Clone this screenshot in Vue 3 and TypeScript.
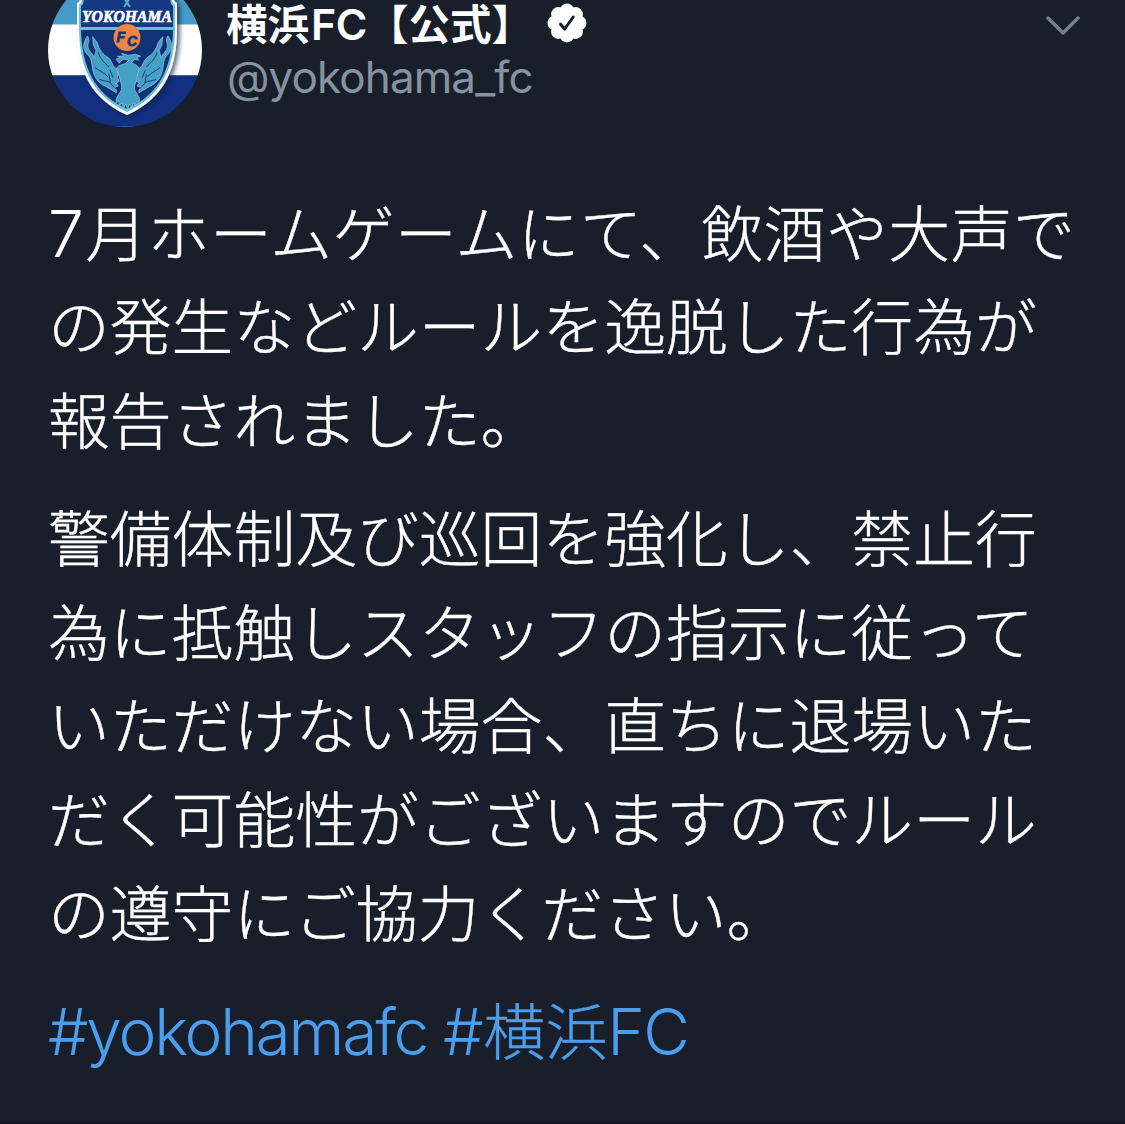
<template>
    <article class="tweet">
        <header class="tweet-header">
            <svg class="avatar" viewBox="0 0 154 154" aria-label="横浜FC">
                <defs>
                    <clipPath id="avatarClip"><circle cx="77" cy="77" r="77" /></clipPath>
                    <filter id="crestShadow" x="-20%" y="-20%" width="150%" height="150%">
                        <feDropShadow dx="3" dy="2" stdDeviation="2" flood-color="#071a3d" flood-opacity="0.65" />
                    </filter>
                </defs>
                <g clip-path="url(#avatarClip)">
                    <rect width="154" height="52" fill="#449bc7" />
                    <rect y="51.5" width="154" height="51" fill="#fff" />
                    <rect y="102.5" width="154" height="52" fill="#122f80" />
                    <path d="M61 153.500h32" stroke="#2868ab" stroke-width="1" />
                    <g filter="url(#crestShadow)">
                        <path d="M31 20Q34 28 29 30V54C29 91 38 124 79 142C120 124 129 91 129 54V30Q124 28 127 20Z" fill="#fff" />
                        <path d="M33 20Q36 29 31 32V54C31 90 41 121 79 139C117 121 127 90 127 54V32Q122 29 125 20Z" fill="#65c1d6" />
                    </g>
                    <path d="M35 20Q37 31 33 33V54H125V33Q121 31 123 20Z" fill="#143884" />
                    <path d="M33 57C34 91 44 120 79 136C114 120 124 91 125 57Z" fill="#113276" />
                    <path d="M31 55.500H127" stroke="#62c3da" stroke-width="2" />
                    <path d="M76 25L82 34M82 25L76 34" fill="none" stroke="#59afc5" stroke-width="2" />
                    <text class="club-name" x="79" y="49" textLength="90" lengthAdjust="spacingAndGlyphs">YOKOHAMA</text>
                    <g transform="translate(28 27) scale(0.3333)">
                        <g fill="#45a0c5" stroke="#a7c5e1" stroke-width="2" stroke-linejoin="round">
                            <path v-for="side in wingSides" :key="side" :transform="side" d="M34 108C20 128 20 150 33 162C43 170 47 182 48 195C50 222 60 242 79 254C93 260 104 269 121 278L121 269L111 264L127 258L120 249L130 244L124 233L129 213L118 204C109 198 107 180 96 172C82 164 69 150 64 128L50 110L52 134L60 151L55 174C51 160 36 153 36 139C35 126 44 120 34 108Z" />
                            <path d="M120 178L134 171L124 169L143 168L137 160L157 166L178 163L194 169L183 172L188 181L176 178L166 188C175 192 184 196 190 204L183 230C180 247 173 259 176 269L190 294L190 310L181 304L180 319L171 309L168 325L160 313L155 329L149 313L142 325L138 309L130 319L129 303L120 309L122 293L137 269C139 257 132 244 130 229L121 206C128 193 139 195 149 190L158 181L144 178L134 183L130 190Z" />
                        </g>
                        <g v-for="side in wingSides" :key="side" :transform="side" fill="none" stroke="#183e84" stroke-width="3" stroke-linecap="round">
                            <path d="M67 158C74 180 88 190 98 200M58 203C72 215 84 216 95 230M71 239L100 246L115 262M102 211L111 232M99 224L103 247" />
                        </g>
                    </g>
                    <circle cx="79" cy="64.500" r="13.500" fill="#eb8644" />
                    <text class="club-mark" x="68.500" y="69">F</text>
                    <text class="club-mark" x="79" y="73">C</text>
                </g>
            </svg>
            <div class="author">
                <div class="name-row">
                    <span class="author-name">横浜<span class="name-latin">FC</span>【公式】</span>
                    <svg class="verified" viewBox="0 0 40 40">
                        <g fill="#fff">
                            <circle cx="20" cy="20" r="15.500" />
                            <circle v-for="angle in badgeAngles" :key="angle" cx="20" cy="7.800" r="7.300" :transform="`rotate(${angle} 20 20)`" />
                        </g>
                        <path d="M13.500 21.200L17.700 26L26.200 14" fill="none" stroke="#191f2a" stroke-width="3" stroke-linecap="round" stroke-linejoin="round" />
                    </svg>
                </div>
                <div class="handle">@yokohama_fc</div>
            </div>
            <svg class="chevron" viewBox="0 0 34 20">
                <path d="M2 2L17 17L32 2" fill="none" stroke="#71808e" stroke-width="3.500" stroke-linecap="round" stroke-linejoin="round" />
            </svg>
        </header>

        <div class="tweet-body">
            <p v-for="(lines, index) in paragraphs" :key="index">
                <span v-for="line in lines" :key="line.text" class="line" :class="{ 'line-first': line.prefix }"><span v-if="line.prefix" class="digit">{{ line.prefix }}</span>{{ line.text }}</span>
            </p>
            <p class="hashtags">
                <a class="tag-latin">#yokohamafc</a>
                <a class="tag-mixed"><span class="latin">#</span>横浜<span class="latin caps">FC</span></a>
            </p>
        </div>
        <div class="bottom-line"></div>
    </article>
</template>

<script setup lang="ts">
interface Line {
    text: string;
    prefix?: string;
}

const badgeAngles = [0, 45, 90, 135, 180, 225, 270, 315];
const wingSides = ['translate(0 0)', 'translate(310 0) scale(-1 1)'];

const paragraphs: Line[][] = [
    [
        { prefix: '7', text: '月ホームゲームにて、飲酒や大声で' },
        { text: 'の発生などルールを逸脱した行為が' },
        { text: '報告されました。' },
    ],
    [
        { text: '警備体制及び巡回を強化し、禁止行' },
        { text: '為に抵触しスタッフの指示に従って' },
        { text: 'いただけない場合、直ちに退場いた' },
        { text: 'だく可能性がございますのでルール' },
        { text: 'の遵守にご協力ください。' },
    ],
];
</script>

<style>
body {
    margin: 0;
    background: #191f2a;
}
</style>

<style scoped>
.tweet {
    box-sizing: border-box;
    display: flex;
    flex-direction: column;
    width: 1125px;
    height: 1124px;
    overflow: hidden;
    background: #191f2a;
    color: #fff;
    font-family: "Noto Sans CJK JP", sans-serif;
}

.tweet-header {
    display: flex;
    flex-shrink: 0;
    height: 183.5px;
    padding: 0 45px 0 48px;
}

.avatar {
    flex-shrink: 0;
    width: 154px;
    height: 154px;
    margin-top: -27px;
}

.club-name {
    fill: #fff;
    font: italic 700 17.5px "Liberation Serif", serif;
    stroke: #fff;
    stroke-width: 0.7px;
    text-anchor: middle;
}

.club-mark {
    fill: #173777;
    font: italic 700 14px "Liberation Sans", sans-serif;
    stroke: #173777;
    stroke-width: 0.8px;
}

.author {
    flex: 1;
    margin-left: 25px;
}

.name-row {
    display: flex;
    align-items: center;
    height: 48px;
    white-space: nowrap;
}

.author-name {
    width: 320px;
    margin-top: -3px;
    margin-left: -1px;
    font-size: 41.5px;
    font-weight: 700;
    line-height: 48px;
}

.name-latin {
    margin-left: 2px;
    font-family: Inter, sans-serif;
    font-size: 43px;
    font-weight: 600;
    letter-spacing: -0.5px;
}

.verified {
    width: 40px;
    height: 40px;
    margin-top: -3px;
    margin-left: 1px;
}

.handle {
    color: #8593a0;
    font-family: Inter, sans-serif;
    font-size: 44px;
    letter-spacing: -0.9px;
    line-height: 58px;
}

.chevron {
    width: 34px;
    height: 20px;
    margin-top: 16px;
}

.tweet-body {
    flex: 1;
    padding-left: 48px;
}

p {
    margin: 0 0 24.5px;
    font-size: 61.8px;
    font-weight: 300;
    line-height: 93.7px;
    -webkit-text-stroke: 0.4px currentColor;
}

.line {
    display: block;
    height: 93.7px;
    white-space: nowrap;
}

.line-first {
    letter-spacing: 0.5px;
}

.digit,
.latin,
.tag-latin {
    font-family: Inter, sans-serif;
    font-size: 64px;
    line-height: 1;
    -webkit-text-stroke: 0;
}

.digit {
    margin-right: 1px;
}

.tag-latin {
    letter-spacing: -2.2px;
}

.caps {
    letter-spacing: -1.5px;
}

.hashtags {
    display: flex;
    align-items: baseline;
    gap: 16px;
    color: #4a9eed;
    white-space: nowrap;
}

.bottom-line {
    flex-shrink: 0;
    height: 3px;
    background: #141923;
}
</style>
